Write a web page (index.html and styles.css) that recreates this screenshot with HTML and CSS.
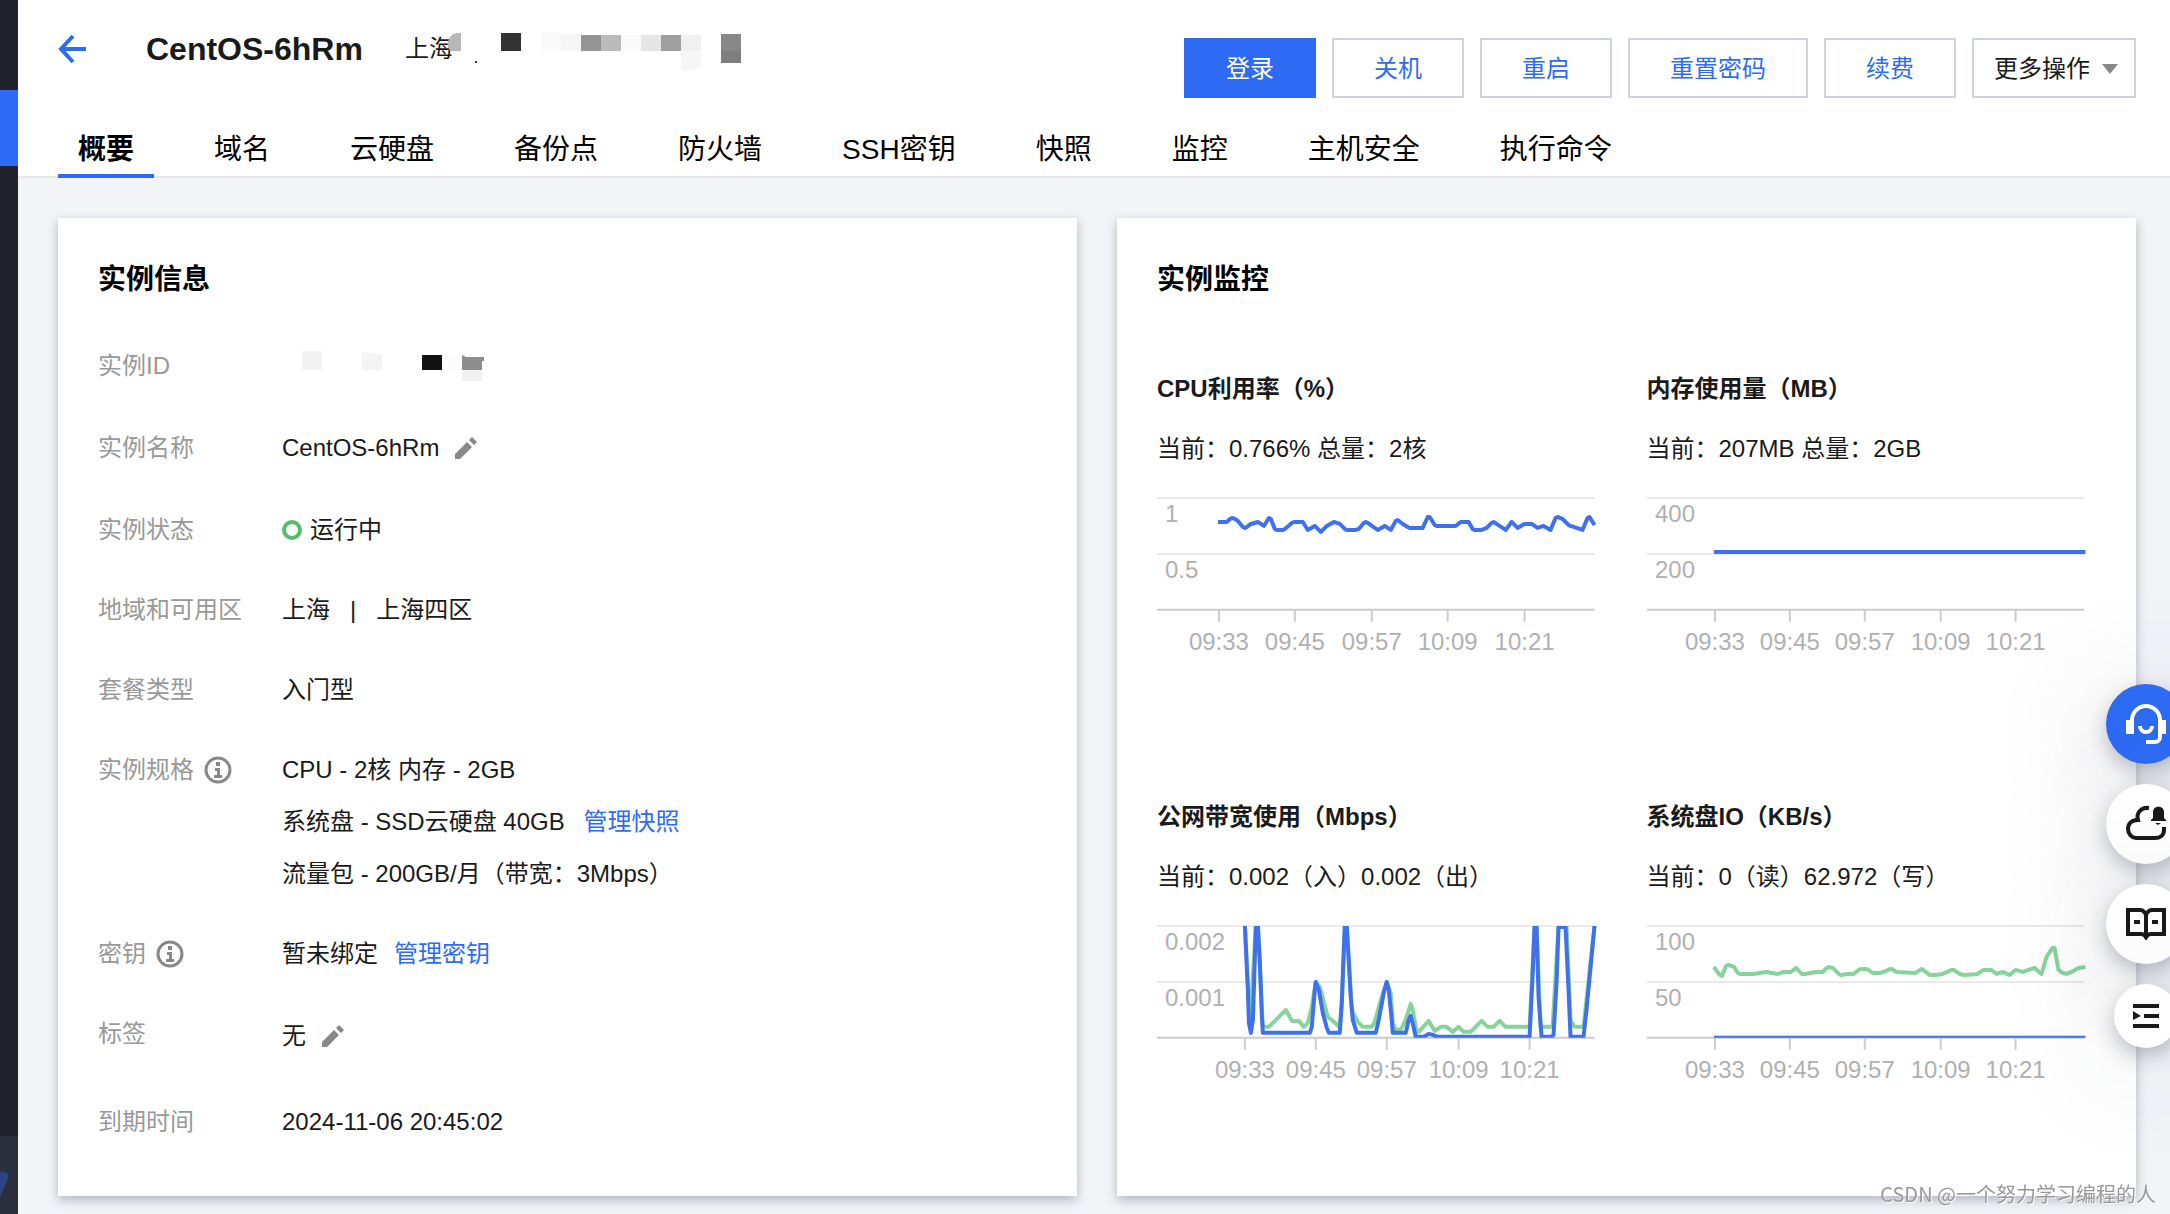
FILE: index.html
```html
<!DOCTYPE html>
<html lang="zh-CN">
<head>
<meta charset="utf-8">
<meta name="viewport" content="width=device-width, initial-scale=1">
<title>CentOS-6hRm</title>
<link rel="stylesheet" href="styles.css">
</head>
<body>
<div class="app">
  <aside class="rail">
    <span class="rail-active"></span>
    <span class="rail-foot">
      <svg width="18" height="78" viewBox="0 0 18 78" aria-hidden="true"><path d="M0 36H5Q9 37 8 42L0 62Z" fill="#2c4480"/></svg>
    </span>
  </aside>

  <div class="page">
    <header class="header">
      <div class="topbar">
        <div class="heading">
          <a class="back" href="#" aria-label="返回">
            <svg width="28" height="28" viewBox="0 0 28 28"><path d="M15 1L3 14L15 27M3 14H28" fill="none" stroke="#2d6bf5" stroke-width="4"/></svg>
          </a>
          <h1 class="title">CentOS-6hRm</h1>
          <div class="place">
            <span>上海</span>
            <svg class="mask-ip" width="300" height="48" viewBox="0 0 300 48" aria-hidden="true">
              <path d="M7 8H11V26H0Q-4 20 -1 14Q2 8 7 8Z" fill="#b8b8b8"/>
              <rect x="25" y="36" width="2" height="2" fill="#333"/>
              <rect x="51" y="8" width="20" height="18" fill="#333"/>
              <rect x="91" y="7" width="20" height="19" fill="#fafafa"/>
              <rect x="111" y="9" width="20" height="17" fill="#f6f6f6"/>
              <rect x="131" y="10" width="20" height="16" fill="#949494"/>
              <rect x="151" y="10" width="20" height="16" fill="#bbb"/>
              <rect x="171" y="10" width="20" height="16" fill="#fafafa"/>
              <rect x="191" y="10" width="20" height="16" fill="#e6e6e6"/>
              <rect x="211" y="10" width="20" height="16" fill="#9f9f9f"/>
              <rect x="231" y="10" width="20" height="16" fill="#f0f0f0"/>
              <path d="M231 26H251V42L239 46H231Z" fill="#f7f7f7"/>
              <rect x="271" y="9" width="20" height="17" fill="#888"/>
              <rect x="271" y="26" width="20" height="12" fill="#7e7e7e"/>
            </svg>
          </div>
        </div>
        <div class="actions">
          <button class="btn btn-primary" type="button">登录</button>
          <button class="btn" type="button">关机</button>
          <button class="btn" type="button">重启</button>
          <button class="btn" type="button">重置密码</button>
          <button class="btn" type="button">续费</button>
          <button class="btn btn-more" type="button" aria-haspopup="menu">更多操作
            <svg width="16" height="10" viewBox="0 0 16 10" aria-hidden="true"><path d="M0 0H16L8 10Z" fill="#888"/></svg>
          </button>
        </div>
      </div>
      <nav class="tabs">
        <a class="tab tab-on" href="#" aria-current="page">概要</a>
        <a class="tab" href="#">域名</a>
        <a class="tab" href="#">云硬盘</a>
        <a class="tab" href="#">备份点</a>
        <a class="tab" href="#">防火墙</a>
        <a class="tab" href="#">SSH密钥</a>
        <a class="tab" href="#">快照</a>
        <a class="tab" href="#">监控</a>
        <a class="tab" href="#">主机安全</a>
        <a class="tab" href="#">执行命令</a>
      </nav>
    </header>

    <main class="content">
      <section class="card">
        <h2 class="card-title">实例信息</h2>
        <dl class="info">
          <div class="row">
            <dt>实例ID</dt>
            <dd>
              <svg class="mask-id" width="204" height="52" viewBox="0 0 204 52" aria-hidden="true">
                <rect x="20" y="11" width="20" height="19" fill="#f3f3f3"/>
                <path d="M80 12L100 14V30H80Z" fill="#f4f4f4"/>
                <rect x="140" y="15" width="20" height="15" fill="#111"/>
                <rect x="160" y="15" width="20" height="15" fill="#fcfcfc"/>
                <path d="M180 15L184 17H202V21H200V30H180Z" fill="#8e8e8e"/>
                <rect x="180" y="30" width="20" height="11" fill="#f1f1f1"/>
              </svg>
            </dd>
          </div>
          <div class="row row-edit">
            <dt>实例名称</dt>
            <dd>CentOS-6hRm
              <button class="icon-btn" type="button" aria-label="编辑名称"><svg width="22" height="22" viewBox="0 0 22 22"><path d="M0 22V17L12 5L17 10L5 22ZM14 3L17 0L22 5L19 8Z" fill="#888"/></svg></button>
            </dd>
          </div>
          <div class="row">
            <dt>实例状态</dt>
            <dd class="status"><span class="dot"></span>运行中</dd>
          </div>
          <div class="row">
            <dt>地域和可用区</dt>
            <dd class="zone"><span>上海</span><span>|</span><span>上海四区</span></dd>
          </div>
          <div class="row">
            <dt>套餐类型</dt>
            <dd>入门型</dd>
          </div>
          <div class="row">
            <dt>实例规格
              <svg width="28" height="28" viewBox="0 0 28 28" aria-hidden="true"><circle cx="14" cy="14" r="12" fill="none" stroke="#888" stroke-width="3"/><path d="M12 6H16V10H12ZM11 12H16V19H18V22H10V19H13V15H11Z" fill="#888"/></svg>
            </dt>
            <dd class="lines">
              <span>CPU - 2核 内存 - 2GB</span>
              <span>系统盘 - SSD云硬盘 40GB <a class="link" href="#">管理快照</a></span>
              <span>流量包 - 200GB/月（带宽：3Mbps）</span>
            </dd>
          </div>
          <div class="row">
            <dt>密钥
              <svg width="28" height="28" viewBox="0 0 28 28" aria-hidden="true"><circle cx="14" cy="14" r="12" fill="none" stroke="#888" stroke-width="3"/><path d="M12 6H16V10H12ZM11 12H16V19H18V22H10V19H13V15H11Z" fill="#888"/></svg>
            </dt>
            <dd>暂未绑定 <a class="link" href="#">管理密钥</a></dd>
          </div>
          <div class="row row-tag">
            <dt>标签</dt>
            <dd>无
              <button class="icon-btn" type="button" aria-label="编辑标签"><svg width="22" height="22" viewBox="0 0 22 22"><path d="M0 22V17L12 5L17 10L5 22ZM14 3L17 0L22 5L19 8Z" fill="#888"/></svg></button>
            </dd>
          </div>
          <div class="row">
            <dt>到期时间</dt>
            <dd>2024-11-06 20:45:02</dd>
          </div>
        </dl>
      </section>

      <section class="card">
        <h2 class="card-title">实例监控</h2>
        <div class="metrics">
          <article class="metric">
            <h3>CPU利用率（%）</h3>
            <p>当前：0.766% 总量：2核</p>
            <svg class="chart" viewBox="0 0 438 176">
              <path class="grid" d="M0 10H438M0 66H438"/>
              <path class="axis" d="M0 122H438M62 122V134M138 122V134M215 122V134M291 122V134M368 122V134"/>
              <text x="8" y="34">1</text><text x="8" y="90">0.5</text>
              <g class="times"><text x="62" y="162">09:33</text><text x="138" y="162">09:45</text><text x="215" y="162">09:57</text><text x="291" y="162">10:09</text><text x="368" y="162">10:21</text></g>
              <polyline class="blue" points="61 34,70 34,73 31,75 30,78 31,81 33,86 39,88 40,90 39,94 36,101 34,107 38,112 30,114 31,118 41,120 42,126 42,128 41,135 35,138 34,146 34,151 42,158 38,164 44,170 38,177 34,183 36,188 41,190 42,199 42,202 41,207 35,209 34,211 35,215 38,221 42,228 38,234 42,239 33,241 32,246 36,251 39,253 40,266 40,271 29,273 29,278 37,280 38,297 38,299 38,304 34,312 34,316 41,318 42,325 42,330 40,335 35,337 34,343 38,349 42,355 34,361 40,366 37,368 36,375 36,381 40,387 38,394 42,399 30,401 29,406 31,412 37,414 38,420 40,426 42,431 30,433 29,438 37"/>
            </svg>
          </article>
          <article class="metric">
            <h3>内存使用量（MB）</h3>
            <p>当前：207MB 总量：2GB</p>
            <svg class="chart" viewBox="0 0 438 176">
              <path class="grid" d="M0 10H438M0 66H438"/>
              <path class="axis" d="M0 122H438M68 122V134M143 122V134M218 122V134M294 122V134M369 122V134"/>
              <text x="8" y="34">400</text><text x="8" y="90">200</text>
              <g class="times"><text x="68" y="162">09:33</text><text x="143" y="162">09:45</text><text x="218" y="162">09:57</text><text x="294" y="162">10:09</text><text x="369" y="162">10:21</text></g>
              <polyline class="blue" points="67 64,439 64"/>
            </svg>
          </article>
          <article class="metric">
            <h3>公网带宽使用（Mbps）</h3>
            <p>当前：0.002（入）0.002（出）</p>
            <svg class="chart" viewBox="0 0 438 176">
              <clipPath id="plot"><rect x="-4" y="10" width="446" height="112"/></clipPath>
              <path class="grid" d="M0 10H438M0 66H438"/>
              <path class="axis" d="M0 122H438M88 122V134M159 122V134M230 122V134M302 122V134M373 122V134"/>
              <text x="8" y="34">0.002</text><text x="8" y="90">0.001</text>
              <g class="times"><text x="88" y="162">09:33</text><text x="159" y="162">09:45</text><text x="230" y="162">09:57</text><text x="302" y="162">10:09</text><text x="373" y="162">10:21</text></g>
              <g clip-path="url(#plot)">
                <polyline class="green" points="88 10,93 110,99 10,101 10,106 111,112 111,120 103,129 94,135 105,142 105,147 111,151 107,155 91,159 66,163 71,166 82,171 101,176 105,183 111,185 87,188 10,190 10,195 94,201 106,206 111,215 111,218 106,225 81,230 66,234 77,236 107,239 114,244 114,249 104,254 88,256 94,260 116,262 116,272 105,278 115,284 111,290 111,296 116,302 111,307 116,314 116,325 105,331 111,337 111,343 105,349 111,373 111,378 10,380 10,384 111,396 111,402 10,410 10,414 104,418 111,427 111,431 74,438 10"/>
                <polyline class="blue" points="88 6,88 10,91 74,92 107,94 117,96 104,98 41,99 10,101 10,103 47,105 101,106 117,153 117,155 111,158 74,159 66,162 74,166 97,170 112,172 117,183 117,185 87,188 10,190 10,194 81,196 104,200 117,219 117,222 104,227 77,230 66,232 74,235 104,236 117,249 117,252 104,254 100,256 107,259 121,267 121,272 118,276 119,281 121,373 121,376 61,378 10,380 10,382 81,385 121,395 121,397 119,400 67,402 11,409 11,412 74,414 121,427 121,430 94,438 10,438 6"/>
              </g>
            </svg>
          </article>
          <article class="metric">
            <h3>系统盘IO（KB/s）</h3>
            <p>当前：0（读）62.972（写）</p>
            <svg class="chart" viewBox="0 0 438 176">
              <path class="grid" d="M0 10H438M0 66H438"/>
              <path class="axis" d="M0 122H438M68 122V134M143 122V134M218 122V134M294 122V134M369 122V134"/>
              <text x="8" y="34">100</text><text x="8" y="90">50</text>
              <g class="times"><text x="68" y="162">09:33</text><text x="143" y="162">09:45</text><text x="218" y="162">09:57</text><text x="294" y="162">10:09</text><text x="369" y="162">10:21</text></g>
              <polyline class="green" points="67 51,69 54,73 59,75 60,79 50,81 49,87 51,91 57,93 58,106 58,119 56,131 58,137 56,144 56,149 52,155 58,158 58,169 56,176 56,180 52,182 51,186 52,192 58,194 59,201 58,207 58,212 54,214 53,220 53,226 57,232 57,237 56,243 53,245 53,250 56,269 57,275 53,283 59,289 59,296 58,305 54,307 54,313 58,318 59,331 58,337 54,339 54,345 54,350 58,356 56,363 59,369 54,376 56,388 52,395 58,400 41,406 32,408 32,412 54,416 57,420 58,425 56,432 52,439 51"/>
              <g clip-path="url(#plot)"><polyline class="blue" points="67 122,439 122"/></g>
            </svg>
          </article>
        </div>
      </section>
    </main>
  </div>
</div>

<div class="dock">
  <button class="dock-btn dock-help" type="button" aria-label="在线客服">
    <svg width="40" height="40" viewBox="0 0 40 40"><path d="M6 18V16A14 14 0 0 1 34 16V33A5 5 0 0 1 29 38H20M14 22A6 6 0 0 0 26 22" fill="none" stroke="#fff" stroke-width="4"/><path d="M0 16H8V30H0ZM34 16H40V30H34Z" fill="#fff"/></svg>
  </button>
  <button class="dock-btn" type="button" aria-label="消息通知">
    <svg width="40" height="40" viewBox="0 0 40 40"><path d="M23 4C15 3 10 9 12 16C5 16 2 20 2 25C2 30 6 34 10 34H29C34 34 38 31 38 26V23" fill="none" stroke="#1a1a1a" stroke-width="4"/><path d="M25 17V16L27 14V8C27 1 38 1 38 8V14L40 16V17ZM29 19H35L32 21Z" fill="#1a1a1a"/></svg>
  </button>
  <button class="dock-btn" type="button" aria-label="文档">
    <svg width="40" height="40" viewBox="0 0 40 40"><path d="M20 34V12C20 9 17 6 14 6H2V30H15Q18 30 20 33Q22 30 25 30H38V6H26C23 6 20 9 20 12" fill="none" stroke="#1a1a1a" stroke-width="4"/><path d="M8 16H14V20H8ZM26 16H32V20H26ZM18 31H22V34L20 36L18 34Z" fill="#1a1a1a"/></svg>
  </button>
  <button class="dock-btn dock-small" type="button" aria-label="收起">
    <svg width="26" height="24" viewBox="0 0 26 24"><path d="M0 0H26V4H0ZM0 20H26V24H0ZM11 10H26V14H11ZM0 7L8 12L0 16Z" fill="#1a1a1a"/></svg>
  </button>
</div>
<div class="watermark">CSDN @一个努力学习编程的人</div>
</body>
</html>
```
FILE: styles.css
```css
* {
  box-sizing: border-box;
}

body,
h1,
h2,
h3,
p,
dl,
dd {
  margin: 0;
}

body {
  position: relative;
  min-height: 100vh;
  background: #f3f4f8;
  color: #1a1a1a;
  font-family: "Liberation Sans", "Noto Sans CJK SC", sans-serif;
  font-size: 24px;
}

a {
  text-decoration: none;
}

button {
  font: inherit;
  cursor: pointer;
}

svg {
  display: block;
  flex: none;
  overflow: visible;
}

.app {
  display: flex;
  min-height: 100vh;
}

/* left rail */
.rail {
  display: flex;
  flex-direction: column;
  flex: none;
  width: 18px;
  padding-top: 90px;
  background: #20222d;
}

.rail-active {
  height: 76px;
  background: #2d6bf5;
}

.rail-foot {
  height: 78px;
  margin-top: auto;
  background: #2a303d;
}

.page {
  flex: 1;
  min-width: 0;
}

/* header */
.header {
  padding: 0 34px 0 40px;
  border-bottom: 2px solid #e6e8ec;
  background: #fff;
}

.topbar {
  display: flex;
  justify-content: space-between;
}

.heading {
  display: flex;
  align-items: center;
  height: 50px;
  margin-top: 24px;
}

.title {
  margin: 0 42px 0 60px;
  font-size: 32px;
  line-height: 48px;
}

.place {
  display: flex;
  line-height: 48px;
}

.mask-ip {
  margin-left: -3px;
}

.actions {
  display: flex;
  gap: 16px;
  margin-top: 38px;
}

.btn {
  height: 60px;
  padding: 2px 40px 0;
  border: 2px solid #cfd3dc;
  background: #fff;
  color: #2d6bf5;
  line-height: 36px;
  white-space: nowrap;
}

.btn-primary {
  border-color: #2d6bf5;
  background: #2d6bf5;
  color: #fff;
}

.btn-more {
  display: flex;
  align-items: center;
  gap: 12px;
  padding: 2px 16px 0 20px;
  color: #1a1a1a;
}

.tabs {
  display: flex;
  gap: 40px;
  margin: 20px 0 -2px;
}

.tab {
  padding: 8px 20px 0;
  border-bottom: 4px solid transparent;
  color: #000;
  font-size: 28px;
  line-height: 48px;
  white-space: nowrap;
}

.tab-on {
  border-color: #2d6bf5;
  font-weight: bold;
}

/* cards */
.content {
  display: grid;
  grid-template-columns: 1fr 1fr;
  gap: 40px;
  padding: 40px 34px 18px 40px;
}

.card {
  min-width: 0;
  padding: 40px 40px 48px;
  background: #fff;
  box-shadow: 0 4px 10px rgba(54, 58, 80, 0.34);
}

.card-title {
  color: #000;
  font-size: 28px;
  line-height: 44px;
}

.info {
  display: flex;
  flex-direction: column;
  gap: 28px;
  margin-top: 38px;
}

.row {
  display: grid;
  grid-template-columns: 184px 1fr;
  align-items: start;
  line-height: 52px;
}

.row-edit {
  line-height: 56px;
}

.row-tag {
  height: 60px;
}

.row-tag dd {
  line-height: 56px;
}

.row dt {
  display: flex;
  align-items: center;
  gap: 10px;
  color: #999;
}

.row dd {
  display: flex;
  align-items: center;
  gap: 16px;
}

.row .status {
  gap: 8px;
}

.row .zone {
  gap: 20px;
}

.row .lines {
  flex-direction: column;
  align-items: flex-start;
  gap: 0;
}

.lines .link {
  margin-left: 12px;
}

.dot {
  width: 20px;
  height: 20px;
  border: 4px solid #57bd6a;
  border-radius: 50%;
}

.icon-btn {
  padding: 0;
  border: 0;
  background: none;
}

.link {
  color: #2d6bf5;
}

/* monitoring */
.metrics {
  display: grid;
  grid-template-columns: 1fr 1fr;
  gap: 132px 52px;
  margin-top: 66px;
  padding-right: 12px;
}

.metric h3 {
  font-size: 24px;
  line-height: 42px;
}

.metric p {
  margin: 18px 0;
  line-height: 42px;
}

.chart {
  width: 100%;
  height: auto;
  fill: #b0b0b0;
  font-size: 24px;
}

.times {
  text-anchor: middle;
}

.grid {
  stroke: #eaeaea;
  stroke-width: 2;
}

.axis {
  stroke: #ccc;
  stroke-width: 2;
}

.blue,
.green {
  fill: none;
  stroke-width: 4;
  stroke-linejoin: round;
}

.blue {
  stroke: #3f70ee;
}

.green {
  stroke: #86d49c;
}

/* floating buttons over the right edge */
.dock {
  position: fixed;
  top: 684px;
  right: -16px;
  display: flex;
  flex-direction: column;
  align-items: center;
  gap: 20px;
}

.dock-btn {
  display: flex;
  align-items: center;
  justify-content: center;
  width: 80px;
  height: 80px;
  padding: 0;
  border: 0;
  border-radius: 50%;
  background: #fff;
  box-shadow: 0 8px 20px rgba(54, 58, 80, 0.3), 0 12px 120px rgba(54, 58, 80, 0.22);
}

.dock-help {
  background: #2d6bf5;
}

.dock-small {
  width: 64px;
  height: 64px;
}

.watermark {
  position: absolute;
  right: 14px;
  bottom: 5px;
  color: #999;
  font-family: "Noto Sans CJK SC", sans-serif;
  font-size: 20px;
  line-height: 30px;
  text-shadow: 1px 1px 1px #fff;
}
```
